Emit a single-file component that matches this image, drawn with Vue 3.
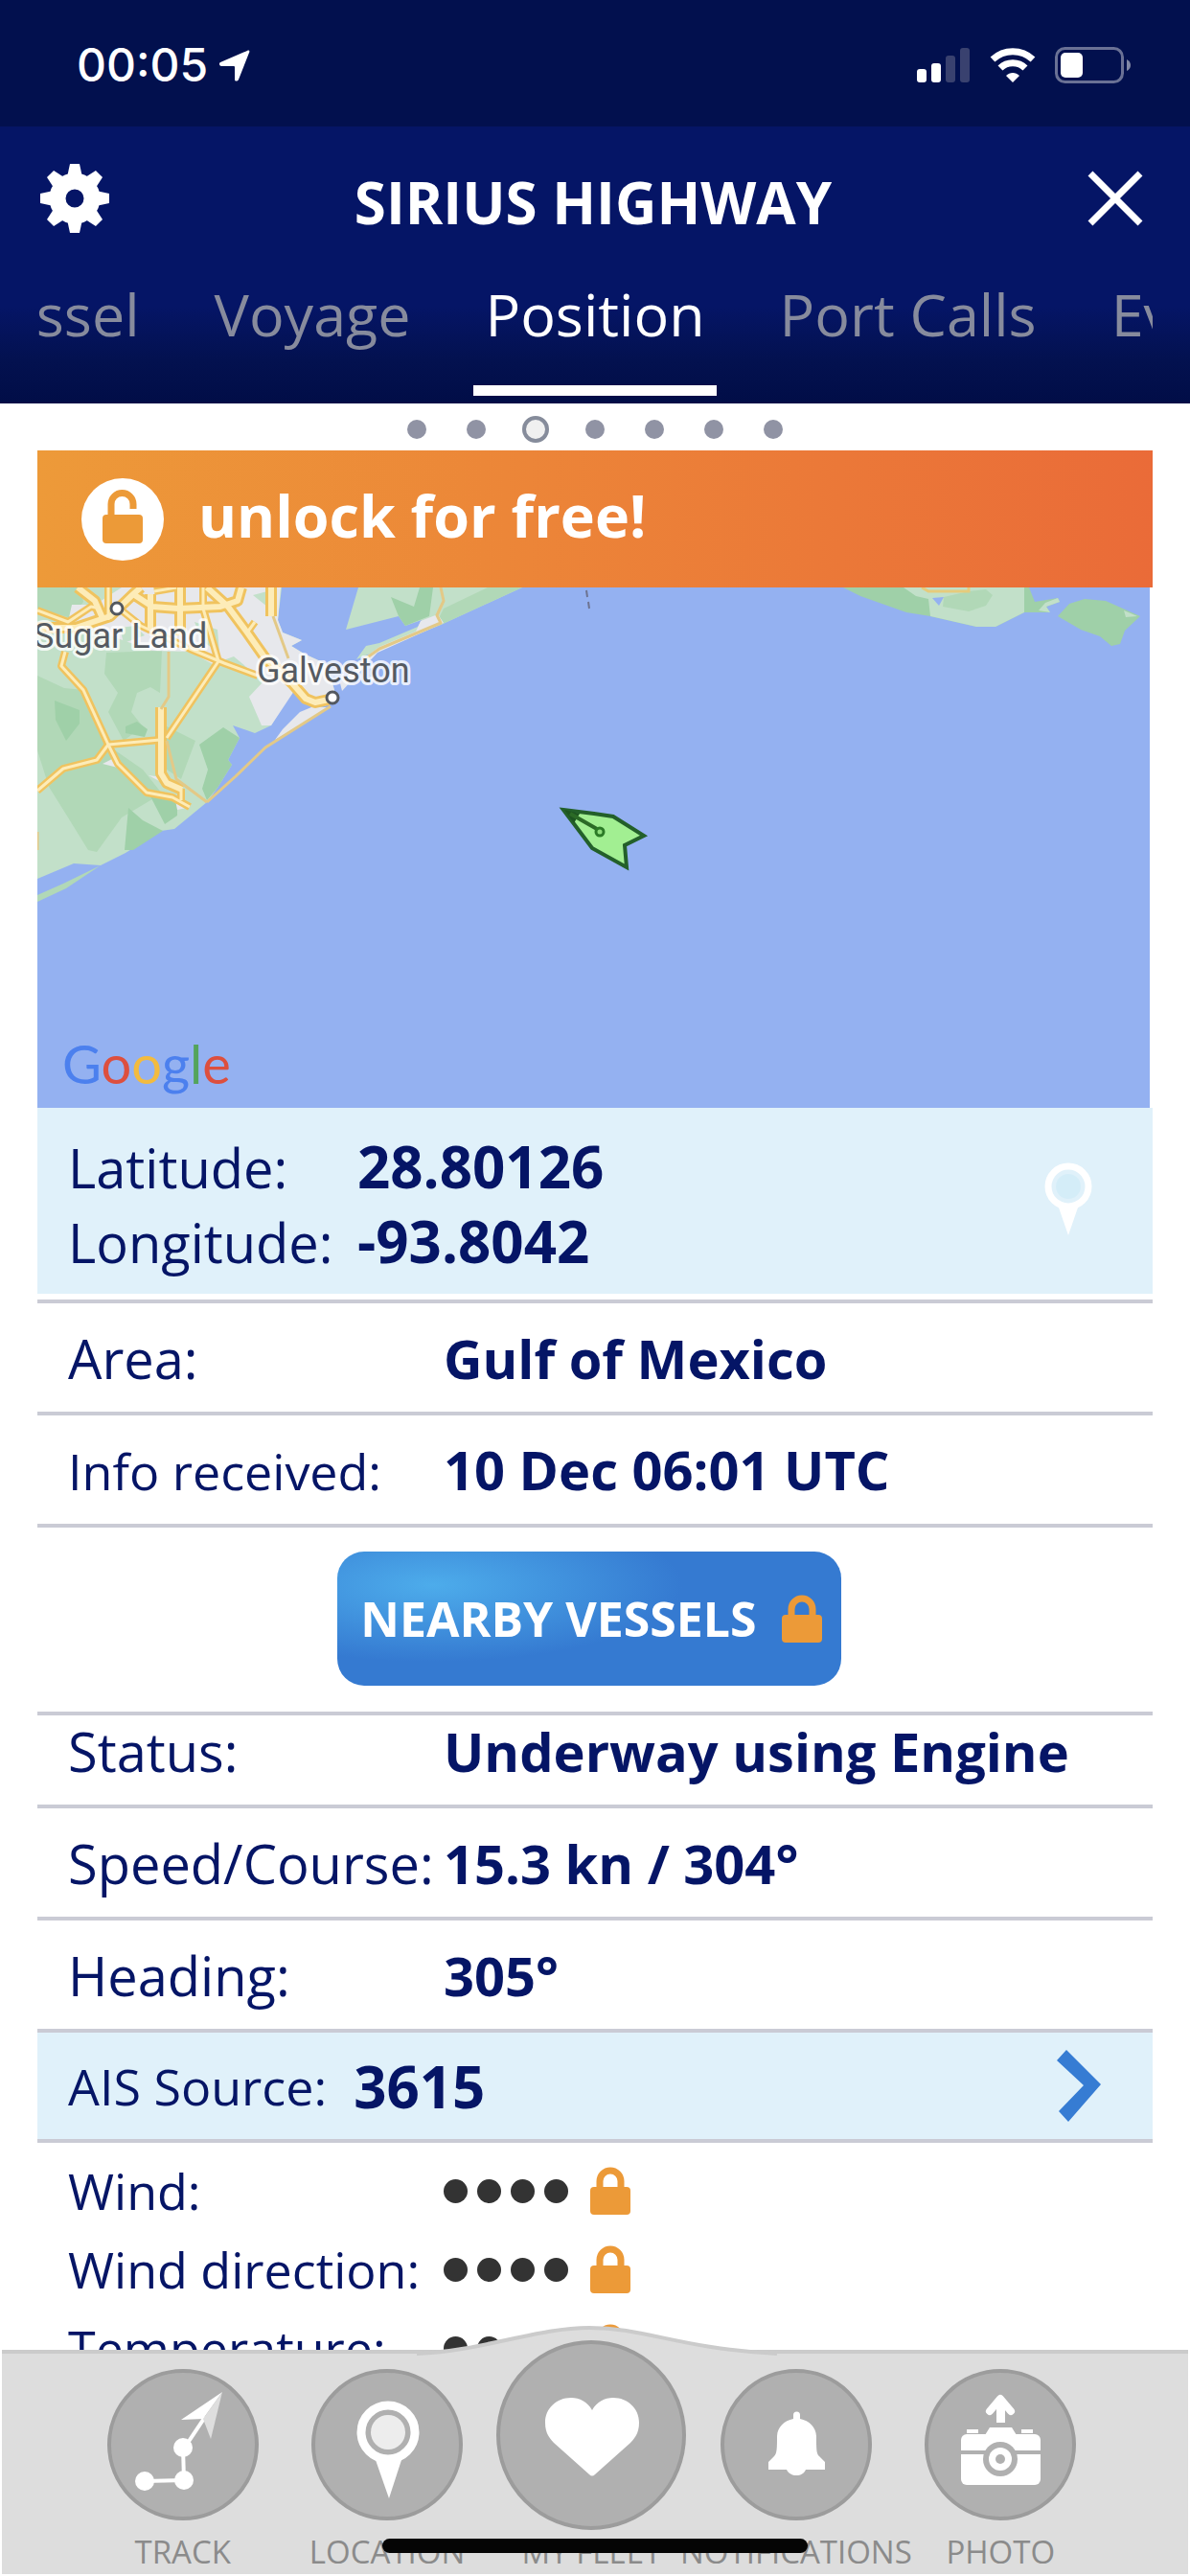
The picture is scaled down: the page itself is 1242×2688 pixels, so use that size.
<template>
  <div class="app">
    <div class="status-bar">
      <div class="clock">
        <span>00:05</span>
        <svg class="arrow-icon" viewBox="0 0 32 33">
          <path d="M29 1 C31 0 32 1 31 3 L20 31 C19 33 16 33 16 31 V18 Q16 17 15 17 H2 C0 17 -1 14 1 13 Z" fill="#fff" />
        </svg>
      </div>
      <div class="indicators">
        <svg class="signal-icon" viewBox="0 0 56 36">
          <rect x="0" y="22" width="10" height="14" rx="3" fill="#fff" />
          <rect x="15" y="16" width="10" height="20" rx="3" fill="#fff" />
          <rect x="30" y="8" width="10" height="28" rx="3" fill="#39416f" />
          <rect x="45" y="0" width="10" height="36" rx="3" fill="#39416f" />
        </svg>
        <svg class="wifi-icon" viewBox="0 0 48 36">
          <path d="M3 12 C15 1 33 1 45 12" fill="none" stroke="#fff" stroke-width="7" />
          <path d="M11 21 C18 14 30 14 37 21" fill="none" stroke="#fff" stroke-width="7" />
          <path d="M24 36 L17 29 C21 25 27 25 31 29 Z" fill="#fff" />
        </svg>
        <svg class="battery-icon" viewBox="0 0 79 38">
          <rect x="1.5" y="1.5" width="69" height="35" rx="9" fill="none" stroke="#6a7195" stroke-width="3" />
          <rect x="6" y="6" width="23" height="26" rx="5" fill="#fff" />
          <path d="M75 13 Q79 15 79 19 Q79 23 75 25 Z" fill="#8087a5" />
        </svg>
      </div>
    </div>

    <header class="header">
      <div class="title-row">
        <button class="icon-button" aria-label="Settings">
          <svg class="gear-icon" viewBox="-36 -36 72 72">
            <polygon
              v-for="n in 8"
              :key="n"
              points="-8,-22 -5,-36 5,-36 8,-22"
              :transform="`rotate(${n * 45})`"
              fill="#fff"
            />
            <circle r="18" fill="none" stroke="#fff" stroke-width="17" />
          </svg>
        </button>
        <h1>SIRIUS HIGHWAY</h1>
        <button class="icon-button" aria-label="Close">
          <svg class="close-icon" viewBox="0 0 58 58">
            <path d="M3 3 L55 55 M55 3 L3 55" stroke="#fff" stroke-width="7" />
          </svg>
        </button>
      </div>
      <nav class="tabs">
        <div class="tab-group left">
          <button class="tab">Vessel</button>
          <button class="tab">Voyage</button>
        </div>
        <button class="tab active">Position</button>
        <div class="tab-group">
          <button class="tab">Port Calls</button>
          <button class="tab">Events</button>
        </div>
      </nav>
    </header>

    <main class="content">
      <div class="pager">
        <button
          v-for="n in 7"
          :key="n"
          class="page-dot"
          :class="{ current: n === 3 }"
          :aria-label="'Page ' + n"
        ></button>
      </div>

      <button class="unlock">
        <svg class="unlock-icon" viewBox="0 0 86 86">
          <circle cx="43" cy="43" r="43" fill="#fff" />
          <rect x="22" y="38" width="42" height="30" rx="4" fill="#ec9a38" />
          <path d="M31 40 V27 a11 11 0 0 1 23 0 V32" fill="none" stroke="#ec9a38" stroke-width="7" />
        </svg>
        <span>unlock for free!</span>
      </button>

      <div class="map">
        <svg class="map-canvas" viewBox="0 0 1161 543" preserveAspectRatio="xMinYMin slice">
          <rect width="1161" height="543" fill="#94b1f1" />
          <!-- Texas coast -->
          <path d="M0 0 H255 L251 34 256 47 276 55 265 61 278 69 302 80 310 107 300 124 288 126 270 112 266 108 244 144 227 152 204 144 211 157 199 180 203 185 188 209 177 224 143 252 129 254 92 277 66 290 38 288 0 304 Z" fill="#c2e0c9" />
          <path d="M0 321 L27 309 66 290 30 314 0 328 Z" fill="#b1d8b7" />
          <g fill="#b1d8b7">
            <path d="M0 0 H45 L48 15 35 32 0 22 Z" />
            <path d="M0 92 L28 105 48 107 74 165 110 190 130 215 88 240 62 276 53 274 32 240 12 208 0 170 Z" />
            <path d="M72 68 L130 66 128 110 118 104 104 110 98 130 110 145 90 160 74 130 84 110 70 90 Z" />
            <path d="M135 145 L165 160 150 200 135 190 Z" />
          </g>
          <g fill="#9fd0a8">
            <path d="M18 118 L44 128 44 142 30 160 19 138 Z" />
            <path d="M169 164 L194 146 211 157 199 180 203 185 188 209 177 222 172 210 178 190 Z" />
            <path d="M95 230 L110 243 131 254 100 274 91 274 Z" />
            <path d="M118 218 L146 222 146 238 133 247 Z" />
            <path d="M92 145 L104 140 115 148 112 156 92 152 Z" />
          </g>
          <g fill="#e7e8ec">
            <path d="M88 0 H254 L251 34 256 47 276 55 265 61 278 69 302 80 310 107 300 124 282 118 268 108 244 144 234 144 221 114 236 98 205 72 183 80 159 67 120 66 75 50 32 36 36 18 60 18 Z" />
            <path d="M306 125 L248 159 256 148 274 130 286 125 Z" />
            <path d="M68 184 L80 178 84 188 Z M116 196 L130 198 138 208 Z M144 222 L156 230 146 232 Z" />
          </g>
          <path d="M86 42 L102 40 112 50 90 58 Z M164 36 L188 44 190 68 172 56 Z M225 8 L240 4 240 20 Z" fill="#c2e0c9" />
          <!-- Bolivar peninsula -->
          <path d="M335 0 H506 L421 39 345 70 333 75 343 61 357 58 397 41 401 34 384 40 377 30 322 44 Z" fill="#c2e0c9" />
          <path d="M415 40 L424 22 470 0 H506 L421 39 Z" fill="#b1d8b7" />
          <path d="M369 10 L393 20 399 0 H413 L409 30 384 40 377 30 Z" fill="#9fd0a8" />
          <path d="M343 72 L357 62 395 46 400 35 418 28 424 37 355 68 318 108 316 100 Z" fill="#e7e8ec" />
          <!-- Louisiana coast -->
          <path d="M841 0 L859 9 907 26 932 30 980 41 H1000 L1030 26 H1057 L1053 20 1067 15 1065 11 1041 15 1035 0 Z" fill="#9fd0a8" />
          <path d="M904 0 H1030 V26 L1000 41 H980 L932 30 930 12 917 9 Z" fill="#c2e0c9" />
          <path d="M946 10 L972 4 990 2 997 8 990 19 972 25 945 20 Z" fill="#b1d8b7" />
          <path d="M1045 24 L1052 16 1065 11 1067 15 1053 20 1057 26 Z" fill="#c2e0c9" />
          <path d="M934 11 L946 10 941 19 Z" fill="#94b1f1" />
          <path d="M923 0 L930 4 H972 V0" fill="none" stroke="#e6cb7c" stroke-width="3" />
          <path d="M1065 30 L1077 17 1093 12 1115 14 1151 30 1135 45 1130 59 1121 61 1109 51 1089 44 Z" fill="#9fd0a8" />
          <path d="M1134 24 L1148 30 1136 31 Z" fill="#c2e0c9" />
          <path d="M573 3 L574 10 M575 15 L576 22" stroke="#6d7391" stroke-width="2" />
          <!-- roads: casing first, then fill -->
          <g fill="none" stroke-linejoin="round">
            <g stroke="#f0c35f">
              <path v-for="(d, i) in highways" :key="'hc' + i" :d="d" stroke-width="12" />
              <path v-for="(d, i) in roads" :key="'rc' + i" :d="d" stroke-width="8" />
            </g>
            <g stroke="#fdecb8">
              <path v-for="(d, i) in highways" :key="'hf' + i" :d="d" stroke-width="6" />
              <path v-for="(d, i) in roads" :key="'rf' + i" :d="d" stroke-width="3" />
            </g>
            <path v-for="(d, i) in lanes" :key="'l' + i" :d="d" stroke="#e3c987" stroke-width="3" />
          </g>
          <g fill="#fff" stroke="#53585f" stroke-width="3">
            <circle cx="83" cy="22" r="6" />
            <circle cx="308" cy="115" r="6" />
          </g>
          <text class="place" x="-4" y="63">Sugar Land</text>
          <text class="place" x="229" y="99">Galveston</text>
          <!-- vessel marker -->
          <path d="M549 232 L581 236 601 239 633 259 613 269 615 292 579 272 Z" fill="#a2ef92" stroke="#23602a" stroke-width="4" />
          <path d="M550 232 L566 236 560 246 Z" fill="#1d5520" />
          <path d="M556 236 L584 252" stroke="#2b6a26" stroke-width="4" />
          <circle cx="587" cy="255" r="4" fill="#8fdc7c" stroke="#2b7a26" stroke-width="3" />
        </svg>
        <div class="google">
          <span class="blue">G</span><span class="red">o</span><span class="yellow">o</span><span class="blue">g</span><span class="green">l</span><span class="red">e</span>
        </div>
      </div>

      <section class="coordinates">
        <dl>
          <dt>Latitude:</dt>
          <dd>28.80126</dd>
          <dt>Longitude:</dt>
          <dd>-93.8042</dd>
        </dl>
        <button class="icon-button" aria-label="Show on map">
          <svg class="pin-icon" viewBox="0 0 50 76">
            <circle cx="25" cy="25" r="21" fill="#e0f1fa" stroke="#fff" stroke-width="7" />
            <circle cx="25" cy="25" r="13" fill="#d4edf8" />
            <path d="M15 47 H35 L25 76 Z" fill="#fff" />
          </svg>
        </button>
      </section>

      <dl class="rows first">
        <div class="row">
          <dt>Area:</dt>
          <dd>Gulf of Mexico</dd>
        </div>
        <div class="row">
          <dt class="small">Info received:</dt>
          <dd>10 Dec 06:01 UTC</dd>
        </div>
      </dl>

      <div class="nearby">
        <button class="nearby-button">
          <span>NEARBY VESSELS</span>
          <svg class="lock-icon" viewBox="0 0 42 50">
            <rect y="21" width="42" height="29" rx="4" fill="#ec9a38" />
            <path d="M10 24 V15 a11 11 0 0 1 22 0 V24" fill="none" stroke="#ec9a38" stroke-width="7" />
          </svg>
        </button>
      </div>

      <dl class="rows">
        <div class="row status">
          <dt>Status:</dt>
          <dd>Underway using Engine</dd>
        </div>
        <div class="row">
          <dt>Speed/Course:</dt>
          <dd>15.3 kn / 304°</dd>
        </div>
        <div class="row">
          <dt>Heading:</dt>
          <dd>305°</dd>
        </div>
      </dl>

      <a class="source" href="#">
        <span class="source-label">AIS Source:</span>
        <strong>3615</strong>
        <svg class="chevron-icon" viewBox="0 0 46 75">
          <polygon points="10,0 46,36 12,75 2,64 28,37 0,11" fill="#367cd3" />
        </svg>
      </a>

      <dl class="weather">
        <div v-for="name in weather" :key="name" class="weather-row">
          <dt>{{ name }}</dt>
          <dd>
            <i v-for="n in 4" :key="n" class="mask-dot"></i>
            <svg class="lock-icon" viewBox="0 0 42 50">
              <rect y="21" width="42" height="29" rx="4" fill="#ec9a38" />
              <path d="M10 24 V15 a11 11 0 0 1 22 0 V24" fill="none" stroke="#ec9a38" stroke-width="7" />
            </svg>
          </dd>
        </div>
      </dl>
    </main>

    <footer class="footer">
      <svg class="hump" viewBox="0 0 376 34">
        <path d="M0 34 V29 C70 26 125 2 180 2 C240 2 270 23 376 29 V34 Z" fill="#ddd" />
        <path d="M0 29 C70 26 125 2 180 2 C240 2 270 23 376 29" fill="none" stroke="#cbcbcb" stroke-width="4" />
      </svg>
      <nav class="bottom-nav">
        <button class="nav-item">
          <svg class="disc" viewBox="0 0 158 158">
            <circle cx="79" cy="79" r="77" fill="#b0b0b0" stroke="#9c9c9c" stroke-width="4" />
            <path d="M39 117 L80 116 79 82" fill="none" stroke="#fff" stroke-width="4" />
            <path d="M82 80 L102 50" stroke="#fff" stroke-width="4" />
            <g fill="#fff">
              <circle cx="39" cy="117" r="10" />
              <circle cx="80" cy="116" r="10" />
              <circle cx="79" cy="82" r="10" />
              <path d="M120 24 L77 53 100 52 Z" />
            </g>
            <path d="M120 24 L100 52 108 73 Z" fill="#dedede" />
          </svg>
          <span>TRACK</span>
        </button>
        <button class="nav-item">
          <svg class="disc" viewBox="0 0 158 158">
            <circle cx="79" cy="79" r="77" fill="#b0b0b0" stroke="#9c9c9c" stroke-width="4" />
            <circle cx="80" cy="66" r="28" fill="none" stroke="#fff" stroke-width="9" />
            <circle cx="80" cy="66" r="18" fill="#ededed" />
            <path d="M67 95 H94 L81 135 Z" fill="#fff" />
          </svg>
          <span>LOCATION</span>
        </button>
        <button class="nav-item main">
          <svg class="disc" viewBox="0 0 198 198">
            <circle cx="99" cy="99" r="97" fill="#b0b0b0" stroke="#9c9c9c" stroke-width="4" />
            <path d="M100 73 C95 64 87 60 78 60 C63 60 51 71 51 86 C51 95 54 101 60 107 L97 140 Q100 143 103 140 L140 107 C146 101 149 95 149 86 C149 71 137 60 122 60 C113 60 105 64 100 73 Z" fill="#fff" />
          </svg>
          <span>MY FLEET</span>
        </button>
        <button class="nav-item">
          <svg class="disc" viewBox="0 0 158 158">
            <circle cx="79" cy="79" r="77" fill="#b0b0b0" stroke="#9c9c9c" stroke-width="4" />
            <path d="M76 52 V48 a3 3 0 0 1 7 0 V52 C93 54 100 61 100 71 C100 82 100 89 103 91 L109 97 V105 H89 C87 109 84 111 79 111 C75 111 71 109 69 105 H50 V97 L56 91 C59 88 59 82 59 71 C59 61 66 54 76 52 Z" fill="#fff" />
          </svg>
          <span>NOTIFICATIONS</span>
        </button>
        <button class="nav-item">
          <svg class="disc" viewBox="0 0 158 158">
            <circle cx="79" cy="79" r="77" fill="#b0b0b0" stroke="#9c9c9c" stroke-width="4" />
            <g fill="#fff">
              <rect x="38" y="68" width="83" height="53" rx="6" />
              <path d="M63 69 L68 61 H91 L96 69 Z" />
              <rect x="44" y="63" width="12" height="4" />
              <rect x="101" y="63" width="12" height="4" />
              <rect x="75" y="36" width="9" height="20" />
            </g>
            <path d="M68 44 L79 31 L90 44" fill="none" stroke="#fff" stroke-width="8" stroke-linecap="round" stroke-linejoin="round" />
            <path d="M38 87 H121" stroke="#b0b0b0" stroke-width="4" />
            <circle cx="79" cy="94" r="18" fill="#b0b0b0" />
            <circle cx="79" cy="94" r="12" fill="#fff" />
            <circle cx="79" cy="94" r="5" fill="#b0b0b0" />
          </svg>
          <span>PHOTO</span>
        </button>
      </nav>
      <div class="home-indicator"></div>
    </footer>
  </div>
</template>

<script setup>
const weather = ['Wind:', 'Wind direction:', 'Temperature:']

const highways = [
  'M42 0 L60 14 68 32',
  'M0 42 L40 42 76 30 100 7 108 0',
  'M100 7 L120 20 147 22 191 20 209 14 213 0',
  'M149 0 V50',
  'M118 7 V44',
  'M177 0 L199 20 219 47 238 74 266 100 280 116 290 120 304 117',
  'M244 0 V30',
  'M129 125 V194 L135 204 151 211',
]

const roads = [
  'M74 0 V34',
  'M0 24 L32 36 56 20 66 22',
  'M88 24 L108 40 159 64 195 79 230 92',
  'M173 0 V22 L189 77 135 157',
  'M29 67 L25 82 48 107 74 164 84 184 114 214 141 219 159 229',
  'M0 212 L27 189 62 180 74 164 128 159',
  'M219 47 L227 36',
  'M150 210 V222',
  'M122 4 L145 0',
]

const lanes = [
  'M137 67 V114 L129 127',
  'M135 160 L145 200 177 224',
  'M246 30 L262 74',
  'M306 124 L238 167 207 197 177 224',
  'M421 0 L424 14 417 29 421 37 357 64 340 76',
  'M0 255 V274',
]
</script>

<style>
body {
  margin: 0;
  background: #fff;
}
</style>

<style scoped>
.app {
  display: flex;
  flex-direction: column;
  height: 100vh;
  overflow: hidden;
  font-family: "Open Sans", "Noto Sans", sans-serif;
  color: #051566;
}

button {
  border: 0;
  margin: 0;
  padding: 0;
  background: none;
  font: inherit;
  color: inherit;
}

svg {
  display: block;
  flex: none;
}

dl,
dd,
h1 {
  margin: 0;
}

/* status bar */
.status-bar {
  display: flex;
  flex: none;
  justify-content: space-between;
  align-items: center;
  height: 132px;
  box-sizing: border-box;
  padding: 4px 62px 0 80px;
  background: #02104e;
}

.clock {
  display: flex;
  align-items: center;
  gap: 12px;
  color: #fff;
  font: 500 48px/60px Inter, sans-serif;
}

.indicators {
  display: flex;
  align-items: center;
  gap: 20px;
}

.arrow-icon {
  width: 32px;
  height: 33px;
}

.signal-icon {
  width: 56px;
  height: 36px;
}

.wifi-icon {
  width: 48px;
  height: 36px;
}

.battery-icon {
  width: 79px;
  height: 38px;
}

/* header */
.header {
  flex: none;
  padding: 0 39px 8px;
  background: linear-gradient(#051566 65%, #03114f 85%, #010d47);
  color: #fff;
}

.title-row {
  display: flex;
  align-items: center;
  height: 150px;
  padding: 0 10px 0 3px;
}

.title-row h1 {
  flex: 1;
  padding: 8px 11px 0 0;
  font-size: 60px;
  line-height: 72px;
  text-align: center;
}

.gear-icon {
  width: 72px;
  height: 72px;
}

.close-icon {
  width: 58px;
  height: 58px;
}

.tabs {
  display: flex;
  gap: 54px;
  overflow: hidden;
}

.tab-group {
  display: flex;
  flex: 1 1 0;
  gap: 54px;
  min-width: 0;
}

.tab-group.left {
  justify-content: flex-end;
}

.tab {
  flex: none;
  padding: 0 12px 28px;
  border-bottom: 11px solid transparent;
  font-size: 61px;
  line-height: 92px;
  color: #878b9d;
}

.tab.active {
  border-bottom-color: #fff;
  color: #fff;
}

/* content */
.content {
  flex: 1 1 0;
  min-height: 0;
  overflow: hidden;
  padding: 0 39px;
  font-size: 56px;
}

.pager {
  display: flex;
  justify-content: center;
  align-items: center;
  gap: 42px;
  height: 49px;
  box-sizing: border-box;
  padding-top: 5px;
}

.page-dot {
  width: 20px;
  height: 20px;
  border-radius: 50%;
  background: #9093a4;
}

.page-dot.current {
  width: 28px;
  height: 28px;
  margin: 0 -4px;
  box-sizing: border-box;
  border: 4px solid #868c9b;
  background: #f0f0f0;
}

.unlock {
  display: flex;
  align-items: center;
  gap: 36px;
  width: 100%;
  height: 143px;
  padding: 0 46px;
  background: linear-gradient(90deg, #ed9a39, #ec8638 42%, #ea6b38);
  color: #fff;
  font-size: 61px;
  font-weight: 700;
  line-height: 80px;
}

.unlock span {
  padding-bottom: 8px;
}

.unlock-icon {
  width: 86px;
  height: 86px;
}

.map {
  position: relative;
  height: 543px;
  margin-right: 3px;
  overflow: hidden;
}

.map-canvas {
  width: 100%;
  height: 100%;
}

.place {
  font: 400 36px Roboto, sans-serif;
  fill: #555a61;
  stroke: #fff;
  stroke-width: 6px;
  stroke-opacity: 0.8;
  stroke-linejoin: round;
  paint-order: stroke;
}

.google {
  position: absolute;
  left: 26px;
  bottom: 10px;
  font: 400 56px/72px Lato, sans-serif;
}

.blue {
  color: #4c80ee;
}

.red {
  color: #dd4f3e;
}

.yellow {
  color: #f3bb3f;
}

.green {
  color: #54a45c;
}

.coordinates {
  display: flex;
  justify-content: space-between;
  align-items: center;
  margin-bottom: 6px;
  padding: 12px 63px 16px 32px;
  background: #e0f1fa;
}

.coordinates dl {
  display: grid;
  grid-template-columns: 302px auto;
  grid-auto-rows: 78px;
  align-items: baseline;
  padding-top: 10px;
  line-height: 78px;
}

.coordinates dd {
  font-size: 60px;
}

.coordinates .pin-icon {
  width: 50px;
  height: 76px;
}

dd {
  font-weight: 700;
}

.rows.first {
  border-top: 4px solid #cacbd5;
}

.row {
  display: grid;
  grid-template-columns: 392px auto;
  align-content: center;
  align-items: baseline;
  height: 117px;
  box-sizing: border-box;
  padding-left: 32px;
  border-bottom: 4px solid #cacbd5;
  line-height: 76px;
}

.row.status {
  height: 97px;
  padding-bottom: 20px;
}

.small {
  font-size: 52px;
}

.nearby {
  display: flex;
  justify-content: center;
  padding: 25px 12px 27px 0;
  border-bottom: 4px solid #cacbd5;
}

.nearby-button {
  display: flex;
  align-items: center;
  gap: 26px;
  height: 140px;
  padding: 0 20px 0 24px;
  border-radius: 28px;
  background: radial-gradient(ellipse 260px 80px at 100px 35px, #4daceb, #357ad1);
  color: #fff;
  font-size: 50px;
  font-weight: 700;
  line-height: 72px;
}

.lock-icon {
  width: 42px;
  height: 50px;
}

.source {
  display: flex;
  align-items: center;
  gap: 28px;
  height: 111px;
  padding: 0 54px 0 32px;
  border-bottom: 4px solid #cacbd5;
  background: #e0f1fa;
  color: inherit;
  text-decoration: none;
}

.source-label {
  font-size: 52px;
}

.source strong {
  font-size: 60px;
}

.chevron-icon {
  width: 46px;
  height: 75px;
  margin-left: auto;
}

.weather {
  padding: 9px 0 0 32px;
}

.weather-row {
  display: grid;
  grid-template-columns: 392px auto;
  align-items: center;
  height: 82px;
  font-size: 52px;
  line-height: 82px;
}

.weather-row dd {
  display: flex;
  align-items: center;
  gap: 10px;
}

.mask-dot {
  width: 25px;
  height: 25px;
  border-radius: 50%;
  background: #333;
}

.weather-row .lock-icon {
  margin-left: 13px;
}

/* footer */
.footer {
  position: relative;
  flex: none;
  margin: 0 2px 2px;
  border-top: 4px solid #cbcbcb;
  background: #ddd;
}

.hump {
  position: absolute;
  left: 50%;
  bottom: 100%;
  width: 376px;
  height: 34px;
  margin: 0 0 -5px -186px;
}

.bottom-nav {
  position: relative;
  display: grid;
  grid-template-columns: repeat(5, minmax(0, 1fr));
  align-items: end;
  padding: 16px 89px 0 82px;
}

.nav-item {
  display: flex;
  flex-direction: column;
  align-items: center;
  gap: 10px;
  color: #8b8b8b;
  font-size: 33px;
  line-height: 46px;
  white-space: nowrap;
}

.disc {
  width: 158px;
  height: 158px;
}

.nav-item.main {
  gap: 0;
  margin-top: -31px;
}

.nav-item.main .disc {
  width: 198px;
  height: 198px;
}

.home-indicator {
  position: absolute;
  left: 50%;
  bottom: 22px;
  width: 444px;
  height: 15px;
  margin-left: -222px;
  border-radius: 8px;
  background: #050505;
}
</style>
